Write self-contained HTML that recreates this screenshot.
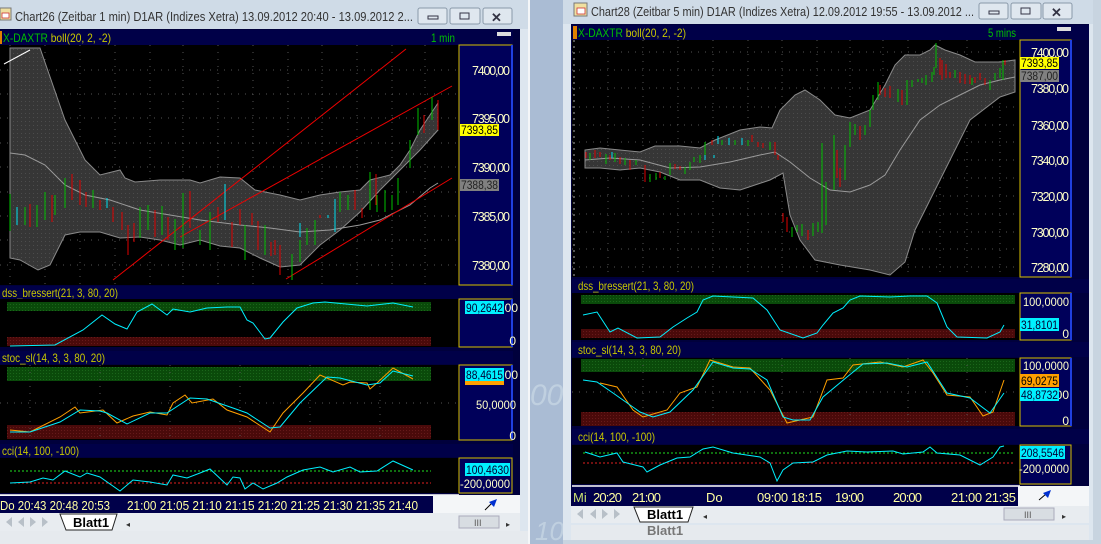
<!DOCTYPE html>
<html><head><meta charset="utf-8">
<style>
html,body{margin:0;padding:0;background:#aabcd4;}
svg{display:block;font-family:"Liberation Sans",sans-serif;}
</style></head>
<body>
<svg width="1101" height="544" viewBox="0 0 1101 544" xmlns="http://www.w3.org/2000/svg">
<defs>
<pattern id="dots" width="4" height="4" patternUnits="userSpaceOnUse"><rect width="4" height="4" fill="#363636"/><rect x="1" y="1" width="1" height="1" fill="#4c4c4c"/></pattern>
<pattern id="gdots" width="3" height="3" patternUnits="userSpaceOnUse"><rect width="3" height="3" fill="#0a4a0a"/><rect x="1" y="1" width="1" height="1" fill="#1a661a"/></pattern>
<pattern id="rdots" width="3" height="3" patternUnits="userSpaceOnUse"><rect width="3" height="3" fill="#4a0a0a"/><rect x="1" y="1" width="1" height="1" fill="#661a1a"/></pattern>
</defs>
<rect width="1101" height="544" fill="#aabcd4"/>
<text x="530" y="405" font-size="30" fill="#c0d0e0" font-style="italic">00</text>
<text x="535" y="540" font-size="26" fill="#c0d0e0" font-style="italic">10</text>

<!-- ================= LEFT WINDOW ================= -->
<rect x="0" y="0" width="528" height="531" fill="#dde6ef"/>
<rect x="0" y="0" width="528" height="29" fill="#cfdbe7"/>
<rect x="0" y="8" width="11" height="12" fill="#f0e0a0" stroke="#777" stroke-width="1"/>
<rect x="2" y="13" width="7" height="5" fill="#fff" stroke="#c33" stroke-width="0.8"/>
<text x="15" y="21" font-size="12.5" fill="#333" textLength="398" lengthAdjust="spacingAndGlyphs">Chart26 (Zeitbar 1 min)  D1AR (Indizes Xetra) 13.09.2012 20:40 - 13.09.2012 2...</text>
<g fill="#dfe7ef" stroke="#8a9aaa"><rect x="418" y="8" width="29" height="16" rx="2"/><rect x="450" y="8" width="30" height="16" rx="2"/><rect x="483" y="8" width="29" height="16" rx="2"/></g>
<rect x="428" y="16" width="10" height="3" fill="none" stroke="#334"/>
<rect x="460" y="13" width="9" height="6" fill="none" stroke="#334"/>
<text x="491" y="22" font-size="13" fill="#334" font-weight="bold">✕</text>

<rect x="0" y="29" width="520" height="466" fill="#00003c"/>
<rect x="0" y="30" width="513" height="15" fill="#000048"/>
<rect x="0" y="31" width="2" height="13" fill="#e08000"/>
<text x="3" y="42" font-size="12" fill="#00c000" textLength="108" lengthAdjust="spacingAndGlyphs">X-DAXTR <tspan fill="#c8c800">boll(20, 2, -2)</tspan></text>
<text x="431" y="42" font-size="12" fill="#00c000" textLength="24" lengthAdjust="spacingAndGlyphs">1 min</text>
<rect x="497" y="32" width="14" height="4" fill="#ddd"/>
<rect x="0" y="45" width="459" height="240" fill="#000"/>
<g stroke="#555" stroke-dasharray="1,6" stroke-width="1">
<path d="M10 45V285M45 45V285M80 45V285M115 45V285M150 45V285M183 45V285M218 45V285M253 45V285M288 45V285M322 45V285M357 45V285M392 45V285M425 45V285"/>
<path d="M0 70H459M0 94H459M0 118H459M0 143H459M0 167H459M0 192H459M0 216H459M0 240H459M0 265H459"/>
</g>
<polygon fill="url(#dots)" stroke="#8a8a8a" points="10,48 40,48 65,120 85,160 100,175 120,170 125,178 135,182 160,180 190,180 200,183 220,177 240,178 255,190 280,195 300,200 320,195 340,192 360,190 370,180 390,175 400,165 410,150 420,130 430,115 438,103 438,130 420,150 400,170 380,190 360,212 340,230 320,245 300,265 280,267 260,258 240,248 220,246 200,240 180,245 160,240 140,237 120,238 100,232 80,232 65,235 50,265 38,270 20,260 10,258"/>
<polyline fill="none" stroke="#9a9a9a" points="10,153 25,155 45,165 65,185 85,195 110,200 140,210 170,215 200,220 240,225 270,228 300,232 330,230 360,225 380,220 410,205 430,188 438,183"/>
<line x1="4" y1="64" x2="30" y2="50" stroke="#fff"/>
<g stroke="#e00" stroke-width="1"><line x1="113" y1="280" x2="406" y2="49"/><line x1="180" y1="237" x2="452" y2="86"/><line x1="286" y1="279" x2="452" y2="178"/></g>
<path stroke="#00c000" fill="none" d="M10 194V231M25 207V225M37 205V227M45 192V220M55 195V215M65 178V208M93 190V208M140 207V238M148 205V230M162 206V235M175 219V250M183 193V248M200 230V245M210 212V250M245 225V260M265 225V255M292 254V280M300 240V262M307 228V245M315 220V245M340 192V212M348 195V210M370 172V210M377 195V212M385 190V212M392 195V210M398 178V205M410 140V168M418 108V135M432 97V120"/>
<path stroke="#e00000" fill="none" d="M30 204V227M52 195V222M72 174V200M80 180V205M86 192V207M100 200V210M113 207V222M122 212V230M128 225V255M134 223V242M155 210V237M168 217V240M190 191V228M218 207V222M232 222V247M240 209V225M252 213V225M258 221V250M271 242V256M275 240V255M280 245V275M320 215V218M355 190V210M362 208V218M376 174V205M424 115V133M438 100V130"/>
<path stroke="#00e0f0" fill="none" d="M17 207V225M107 198V208M225 184V220M300 223V237M328 215V218M335 199V232"/>
<rect x="459" y="45" width="53" height="240" fill="#00005a" stroke="#d8c000" stroke-width="1"/>
<line x1="512" y1="45" x2="512" y2="285" stroke="#2040e0" stroke-width="2"/>
<g font-size="12.5" fill="#ffffc8" text-anchor="end" lengthAdjust="spacingAndGlyphs">
<text x="510" y="75" textLength="38">7400,00</text><text x="510" y="123" textLength="38">7395,00</text><text x="510" y="172" textLength="38">7390,00</text><text x="510" y="221" textLength="38">7385,00</text><text x="510" y="270" textLength="38">7380,00</text>
</g>
<rect x="460" y="124" width="39" height="12" fill="#ffff00"/><text x="461" y="134" font-size="12" fill="#000" textLength="37" lengthAdjust="spacingAndGlyphs">7393,85</text>
<rect x="460" y="179" width="39" height="12" fill="#808080"/><text x="461" y="189" font-size="12" fill="#222" textLength="37" lengthAdjust="spacingAndGlyphs">7388,38</text>

<!-- dss left -->
<rect x="0" y="286" width="513" height="13" fill="#000048"/>
<text x="2" y="297" font-size="12" fill="#c8c800" textLength="116" lengthAdjust="spacingAndGlyphs">dss_bressert(21, 3, 80, 20)</text>
<rect x="0" y="299" width="459" height="48" fill="#000"/>
<rect x="7" y="302" width="424" height="9" fill="url(#gdots)"/>
<rect x="7" y="337" width="424" height="9" fill="url(#rdots)"/>
<polyline fill="none" stroke="#00f0ff" points="10,346 55,345 83,330 102,315 115,324 127,329 137,312 152,304 167,315 173,309 190,312 207,308 227,307 240,307 247,320 253,323 265,339 270,338 283,322 297,308 313,303 325,302 367,306 393,303 413,307"/>
<rect x="459" y="299" width="53" height="48" fill="#00005a" stroke="#d8c000"/>
<line x1="512" y1="299" x2="512" y2="347" stroke="#2040e0" stroke-width="2"/>
<text x="518" y="312" font-size="12" fill="#ffffc8" text-anchor="end">00</text>
<rect x="465" y="301" width="39" height="13" fill="#00f0ff"/><text x="466" y="312" font-size="12" fill="#003" textLength="37" lengthAdjust="spacingAndGlyphs">90,2642</text>
<text x="516" y="345" font-size="12" fill="#ffffc8" text-anchor="end">0</text>

<!-- stoc left -->
<rect x="0" y="351" width="513" height="13" fill="#000048"/>
<text x="2" y="362" font-size="12" fill="#c8c800" textLength="103" lengthAdjust="spacingAndGlyphs">stoc_sl(14, 3, 3, 80, 20)</text>
<rect x="0" y="365" width="459" height="75" fill="#000"/>
<rect x="7" y="367" width="424" height="14" fill="url(#gdots)"/>
<rect x="7" y="425" width="424" height="14" fill="url(#rdots)"/>
<g stroke="#555" stroke-dasharray="1,6"><path d="M0 403H459M30 365V440M100 365V440M170 365V440M240 365V440M310 365V440M380 365V440"/></g>
<polyline fill="none" stroke="#ffa000" points="10,430 30,432 60,417 75,407 80,413 103,410 117,423 133,416 150,412 167,415 173,403 185,395 192,403 213,399 227,410 247,417 270,432 283,413 303,393 320,375 343,385 350,382 367,383 370,389 377,383 393,368 413,379"/>
<polyline fill="none" stroke="#00f0ff" points="10,432 30,432 60,422 80,410 100,411 107,413 127,424 150,413 167,413 190,398 207,399 233,408 247,413 270,428 280,427 300,403 327,377 340,378 367,385 380,383 393,371 413,376"/>
<rect x="459" y="365" width="53" height="75" fill="#00005a" stroke="#d8c000"/>
<line x1="512" y1="365" x2="512" y2="440" stroke="#2040e0" stroke-width="2"/>
<text x="518" y="379" font-size="12" fill="#ffffc8" text-anchor="end">00</text>
<rect x="465" y="380" width="39" height="5" fill="#ffa000"/>
<rect x="465" y="368" width="39" height="13" fill="#00f0ff"/><text x="466" y="379" font-size="12" fill="#003" textLength="37" lengthAdjust="spacingAndGlyphs">88,4615</text>
<text x="516" y="409" font-size="12" fill="#ffffc8" text-anchor="end" textLength="40" lengthAdjust="spacingAndGlyphs">50,0000</text>
<text x="516" y="440" font-size="12" fill="#ffffc8" text-anchor="end">0</text>

<!-- cci left -->
<rect x="0" y="444" width="513" height="13" fill="#000048"/>
<text x="2" y="455" font-size="12" fill="#c8c800" textLength="77" lengthAdjust="spacingAndGlyphs">cci(14, 100, -100)</text>
<rect x="0" y="458" width="459" height="35" fill="#000"/>
<line x1="10" y1="471" x2="431" y2="471" stroke="#20e020" stroke-dasharray="2,2"/>
<line x1="10" y1="483" x2="431" y2="483" stroke="#e02020" stroke-dasharray="2,2"/>
<polyline fill="none" stroke="#00f0ff" points="10,483 30,482 43,478 53,480 65,471 80,477 87,473 100,477 120,491 133,480 150,482 167,485 173,475 187,478 200,473 210,469 227,485 233,477 240,478 245,489 253,483 263,489 277,483 287,477 303,470 320,467 333,472 350,467 360,472 377,471 393,461 413,470"/>
<rect x="459" y="458" width="53" height="35" fill="#00005a" stroke="#d8c000"/>
<rect x="465" y="463" width="45" height="13" fill="#00f0ff"/><text x="466" y="474" font-size="12" fill="#003" textLength="43" lengthAdjust="spacingAndGlyphs">100,4630</text>
<text x="510" y="488" font-size="12" fill="#ffffc8" text-anchor="end" textLength="50" lengthAdjust="spacingAndGlyphs">-200,0000</text>
<line x1="0" y1="495" x2="459" y2="495" stroke="#fff" stroke-width="1.5"/>
<rect x="0" y="496" width="433" height="17" fill="#00004a"/>
<text x="0" y="510" font-size="13" fill="#ffffa0" textLength="110" lengthAdjust="spacingAndGlyphs">Do 20:43 20:48 20:53</text>
<text x="127" y="510" font-size="13" fill="#ffffa0" textLength="291" lengthAdjust="spacingAndGlyphs">21:00 21:05 21:10 21:15 21:20 21:25 21:30 21:35 21:40</text>
<rect x="433" y="495" width="87" height="18" fill="#f4f6f8"/>
<line x1="485" y1="510" x2="492" y2="503" stroke="#000"/><polygon points="489,502 497,499 494,507" fill="#0030d0"/>
<rect x="0" y="513" width="520" height="18" fill="#e8ecf0"/>
<g fill="#b8c0c8"><polygon points="6,522 12,517 12,527"/><polygon points="18,522 24,517 24,527"/><polygon points="36,522 30,517 30,527"/><polygon points="48,522 42,517 42,527"/></g>
<polygon points="60,514 117,514 112,530 66,530" fill="#fff" stroke="#222"/>
<text x="73" y="527" font-size="13" font-weight="bold" fill="#000">Blatt1</text>
<text x="126" y="527" font-size="8" fill="#333">◂</text>
<rect x="459" y="516" width="40" height="12" fill="#d8dde2" stroke="#aab"/>
<text x="474" y="526" font-size="9" fill="#555">III</text>
<text x="506" y="527" font-size="8" fill="#333">▸</text>
<rect x="0" y="531" width="528" height="13" fill="#e6eaee"/>
<rect x="528" y="0" width="2" height="544" fill="#f4f6f8"/>

<!-- ================= RIGHT WINDOW ================= -->
<rect x="563" y="0" width="538" height="544" fill="#dde6ef"/>
<rect x="563" y="0" width="532" height="24" fill="#cfdbe7"/>
<rect x="1093" y="0" width="8" height="544" fill="#c8d4e0"/>
<rect x="574" y="3" width="13" height="13" fill="#f0e0a0" stroke="#777"/>
<rect x="577" y="8" width="8" height="6" fill="#fff" stroke="#c33" stroke-width="0.8"/>
<text x="591" y="16" font-size="12.5" fill="#333" textLength="383" lengthAdjust="spacingAndGlyphs">Chart28 (Zeitbar 5 min)  D1AR (Indizes Xetra) 12.09.2012 19:55 - 13.09.2012 ...</text>
<g fill="#dfe7ef" stroke="#8a9aaa"><rect x="979" y="3" width="29" height="16" rx="2"/><rect x="1011" y="3" width="30" height="16" rx="2"/><rect x="1043" y="3" width="29" height="16" rx="2"/></g>
<rect x="989" y="11" width="10" height="3" fill="none" stroke="#334"/>
<rect x="1021" y="8" width="9" height="6" fill="none" stroke="#334"/>
<text x="1051" y="17" font-size="13" fill="#334" font-weight="bold">✕</text>

<rect x="571" y="24" width="518" height="482" fill="#00003c"/>
<rect x="572" y="25" width="517" height="15" fill="#000048"/>
<rect x="573" y="26" width="4" height="13" fill="#e08000"/>
<text x="578" y="37" font-size="12" fill="#00c000" textLength="108" lengthAdjust="spacingAndGlyphs">X-DAXTR <tspan fill="#c8c800">boll(20, 2, -2)</tspan></text>
<text x="988" y="37" font-size="12" fill="#00c000" textLength="28" lengthAdjust="spacingAndGlyphs">5 mins</text>
<rect x="1057" y="27" width="14" height="4" fill="#ddd"/>
<rect x="572" y="40" width="448" height="237" fill="#000"/>
<g stroke="#555" stroke-dasharray="1,6">
<path d="M608 40V277M643 40V277M678 40V277M713 40V277M748 40V277M782 40V277M817 40V277M850 40V277M883 40V277M908 40V277M940 40V277M967 40V277M1000 40V277"/>
<path d="M572 52H1020M572 70H1020M572 88H1020M572 107H1020M572 125H1020M572 142H1020M572 160H1020M572 178H1020M572 196H1020M572 214H1020M572 232H1020M572 249H1020M572 267H1020"/>
</g>
<g stroke="#aaa" stroke-dasharray="2,4"><path d="M574 40V277"/></g>
<polygon fill="url(#dots)" stroke="#8a8a8a" points="585,150 600,148 640,152 655,146 680,146 700,148 715,140 740,130 760,127 772,128 780,110 795,95 805,90 820,100 835,115 850,118 870,110 885,85 895,65 905,55 920,55 930,50 935,45 945,50 960,55 975,62 1000,62 1015,60 1015,92 1000,97 970,120 940,180 915,230 905,262 890,275 870,270 840,265 815,260 800,240 790,215 783,173 770,180 740,190 720,188 700,180 680,180 660,172 640,168 620,170 600,168 585,168"/>
<polyline fill="none" stroke="#9a9a9a" points="585,160 610,158 640,160 670,168 700,167 730,162 760,155 775,152 790,162 810,178 830,190 850,192 870,185 885,175 900,150 920,120 940,105 960,95 980,85 1000,80 1015,77"/>
<path stroke="#00c000" fill="none" d="M590 153V160M606 154V164M615 153V162M625 158V165M636 160V165M650 174V182M656 173V180M665 176V180M670 163V175M685 167V174M690 162V170M694 157V162M700 155V163M705 142V160M722 140V145M735 140V145M748 140V146M770 142V150M792 227V237M797 225V232M802 224V236M813 223V236M818 222V232M822 143V233M826 182V225M834 135V190M845 145V180M850 122V147M855 124V135M865 125V135M870 110V127M873 95V110M878 82V100M898 89V102M907 80V105M912 80V87M918 79V82M922 78V83M926 75V85M932 72V82M934 67V75M936 43V68M955 70V78M972 78V85M990 80V90M995 73V80M1000 68V78M1003 60V80"/>
<path stroke="#e00000" fill="none" d="M586 152V158M595 150V158M600 152V157M610 155V160M620 157V164M630 160V170M645 165V182M660 172V178M675 164V169M680 166V170M712 140V145M752 135V142M758 142V147M763 143V148M775 142V155M778 155V160M783 213V222M787 217V232M808 230V240M837 150V178M840 168V187M860 126V140M880 85V95M885 88V97M890 86V98M902 90V105M940 58V75M942 60V80M946 64V78M950 72V78M960 72V83M965 74V84M970 75V84M975 77V83M980 73V80M985 78V85M1005 60V65"/>
<path stroke="#00e0f0" fill="none" d="M705 155V160M714 155V158M718 136V144M729 138V145M742 138V145M612 152V158"/>
<rect x="1020" y="40" width="51" height="237" fill="#00005a" stroke="#d8c000"/>
<line x1="1071" y1="40" x2="1071" y2="277" stroke="#2040e0" stroke-width="2"/>
<g font-size="12.5" fill="#ffffc8" text-anchor="end" lengthAdjust="spacingAndGlyphs">
<text x="1069" y="57" textLength="38">7400,00</text><text x="1069" y="93" textLength="38">7380,00</text><text x="1069" y="130" textLength="38">7360,00</text><text x="1069" y="165" textLength="38">7340,00</text><text x="1069" y="201" textLength="38">7320,00</text><text x="1069" y="237" textLength="38">7300,00</text><text x="1069" y="272" textLength="38">7280,00</text>
</g>
<rect x="1020" y="57" width="39" height="12" fill="#ffff00"/><text x="1021" y="67" font-size="12" fill="#000" textLength="37" lengthAdjust="spacingAndGlyphs">7393,85</text>
<rect x="1020" y="70" width="39" height="12" fill="#808080"/><text x="1021" y="80" font-size="12" fill="#222" textLength="37" lengthAdjust="spacingAndGlyphs">7387,00</text>

<!-- dss right -->
<rect x="572" y="279" width="517" height="14" fill="#000048"/>
<text x="578" y="290" font-size="12" fill="#c8c800" textLength="116" lengthAdjust="spacingAndGlyphs">dss_bressert(21, 3, 80, 20)</text>
<rect x="572" y="293" width="448" height="47" fill="#000"/>
<rect x="581" y="295" width="434" height="9" fill="url(#gdots)"/>
<rect x="581" y="329" width="434" height="9" fill="url(#rdots)"/>
<polyline fill="none" stroke="#00f0ff" points="583,315 597,312 610,332 618,328 637,338 660,337 673,327 687,318 697,312 703,300 713,296 733,297 753,298 767,310 780,330 803,338 817,333 823,325 833,313 843,308 850,300 860,296 890,297 910,296 927,296 937,303 947,327 957,337 987,338 1000,332 1004,325"/>
<rect x="1020" y="293" width="51" height="47" fill="#00005a" stroke="#d8c000"/>
<line x1="1071" y1="293" x2="1071" y2="340" stroke="#2040e0" stroke-width="2"/>
<text x="1069" y="306" font-size="12" fill="#ffffc8" text-anchor="end" textLength="46" lengthAdjust="spacingAndGlyphs">100,0000</text>
<rect x="1020" y="318" width="39" height="13" fill="#00f0ff"/><text x="1021" y="329" font-size="12" fill="#003" textLength="37" lengthAdjust="spacingAndGlyphs">31,8101</text>
<text x="1069" y="338" font-size="12" fill="#ffffc8" text-anchor="end">0</text>

<!-- stoc right -->
<rect x="572" y="342" width="517" height="15" fill="#000048"/>
<text x="578" y="354" font-size="12" fill="#c8c800" textLength="103" lengthAdjust="spacingAndGlyphs">stoc_sl(14, 3, 3, 80, 20)</text>
<rect x="572" y="358" width="448" height="68" fill="#000"/>
<rect x="581" y="359" width="434" height="13" fill="url(#gdots)"/>
<rect x="581" y="412" width="434" height="14" fill="url(#rdots)"/>
<g stroke="#555" stroke-dasharray="1,6"><path d="M572 392H1020M643 358V426M713 358V426M782 358V426M850 358V426M908 358V426M967 358V426"/></g>
<polyline fill="none" stroke="#ffa000" points="600,383 617,387 633,410 643,417 667,410 680,393 697,387 710,360 733,367 750,368 770,390 787,423 813,417 827,380 843,378 853,365 880,362 903,367 923,360 933,373 947,395 970,397 983,416 993,412 1004,380"/>
<polyline fill="none" stroke="#00f0ff" points="583,380 597,382 613,393 640,412 653,417 670,412 693,390 713,362 733,368 750,369 767,380 783,417 793,420 810,420 823,397 847,377 863,364 887,363 907,367 927,362 947,393 970,398 990,413 1004,393"/>
<rect x="1020" y="358" width="51" height="68" fill="#00005a" stroke="#d8c000"/>
<line x1="1071" y1="358" x2="1071" y2="426" stroke="#2040e0" stroke-width="2"/>
<text x="1069" y="370" font-size="12" fill="#ffffc8" text-anchor="end" textLength="46" lengthAdjust="spacingAndGlyphs">100,0000</text>
<text x="1069" y="399" font-size="12" fill="#ffffc8" text-anchor="end">00</text>
<rect x="1020" y="374" width="39" height="13" fill="#ffa000"/><text x="1021" y="385" font-size="12" fill="#000" textLength="37" lengthAdjust="spacingAndGlyphs">69,0275</text>
<rect x="1020" y="388" width="39" height="13" fill="#00f0ff"/><text x="1021" y="399" font-size="12" fill="#003" textLength="37" lengthAdjust="spacingAndGlyphs">48,8732</text>
<text x="1069" y="425" font-size="12" fill="#ffffc8" text-anchor="end">0</text>

<!-- cci right -->
<rect x="572" y="429" width="517" height="15" fill="#000048"/>
<text x="578" y="441" font-size="12" fill="#c8c800" textLength="77" lengthAdjust="spacingAndGlyphs">cci(14, 100, -100)</text>
<rect x="572" y="445" width="448" height="39" fill="#000"/>
<line x1="583" y1="453" x2="1015" y2="453" stroke="#20e020" stroke-dasharray="2,2"/>
<line x1="583" y1="463" x2="1015" y2="463" stroke="#e02020" stroke-dasharray="2,2"/>
<polyline fill="none" stroke="#00f0ff" points="585,452 600,457 617,453 623,462 643,467 647,472 660,465 677,458 690,457 703,449 713,447 733,453 760,457 770,463 777,481 783,470 793,463 813,462 827,455 847,451 867,452 893,451 903,454 923,452 930,447 937,453 960,455 980,465 993,457 1000,447 1004,446"/>
<rect x="1020" y="445" width="51" height="39" fill="#00005a" stroke="#d8c000"/>
<rect x="1020" y="446" width="45" height="13" fill="#00f0ff"/><text x="1021" y="457" font-size="12" fill="#003" textLength="43" lengthAdjust="spacingAndGlyphs">208,5546</text>
<text x="1069" y="473" font-size="12" fill="#ffffc8" text-anchor="end" textLength="50" lengthAdjust="spacingAndGlyphs">-200,0000</text>
<line x1="572" y1="486" x2="1020" y2="486" stroke="#fff" stroke-width="1.5"/>
<rect x="572" y="487" width="446" height="19" fill="#00004a"/>
<g font-size="13" fill="#ffffa0" lengthAdjust="spacingAndGlyphs">
<text x="573" y="502" fill="#c8e070">Mi</text><text x="593" y="502" textLength="29">20:20</text><text x="632" y="502" textLength="29">21:00</text><text x="706" y="502">Do</text><text x="757" y="502" textLength="65">09:00 18:15</text><text x="835" y="502" textLength="29">19:00</text><text x="893" y="502" textLength="29">20:00</text><text x="951" y="502" textLength="65">21:00 21:35</text>
</g>
<rect x="1018" y="486" width="71" height="20" fill="#f4f6f8"/>
<line x1="1039" y1="500" x2="1046" y2="494" stroke="#000"/><polygon points="1043,493 1051,490 1048,498" fill="#0030d0"/>
<rect x="571" y="506" width="518" height="17" fill="#e8ecf0"/>
<g fill="#b8c0c8"><polygon points="577,514 583,509 583,519"/><polygon points="590,514 596,509 596,519"/><polygon points="608,514 602,509 602,519"/><polygon points="620,514 614,509 614,519"/></g>
<polygon points="634,507 693,507 688,522 640,522" fill="#fff" stroke="#222"/>
<text x="647" y="519" font-size="13" font-weight="bold" fill="#000">Blatt1</text>
<text x="703" y="519" font-size="8" fill="#333">◂</text>
<rect x="1004" y="508" width="50" height="12" fill="#d8dde2" stroke="#aab"/>
<text x="1024" y="518" font-size="9" fill="#555">III</text>
<text x="1062" y="519" font-size="8" fill="#333">▸</text>
<rect x="571" y="525" width="518" height="15" fill="#e6eaee"/>
<text x="647" y="535" font-size="13" font-weight="bold" fill="#777">Blatt1</text>
<rect x="563" y="540" width="530" height="4" fill="#c8d4e0"/>
</svg>
</body></html>
